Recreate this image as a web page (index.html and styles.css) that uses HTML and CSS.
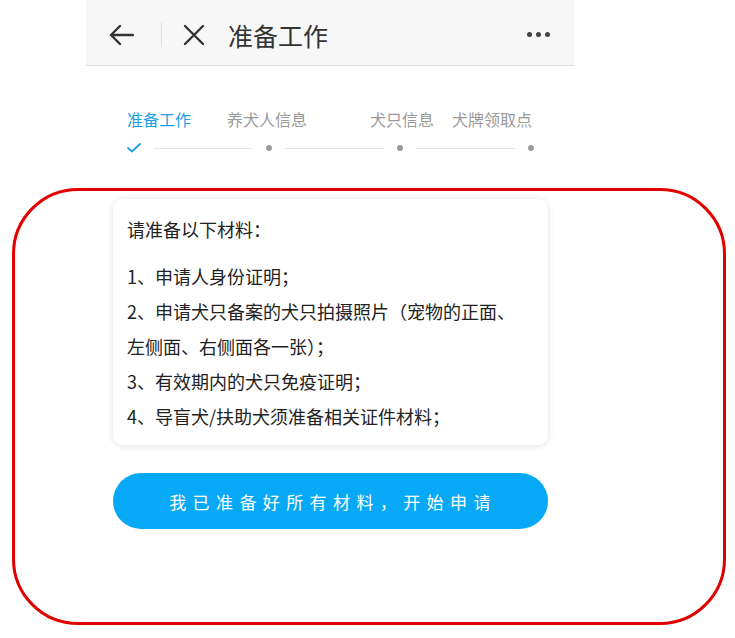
FILE: index.html
```html
<!DOCTYPE html>
<html lang="zh-CN">
<head>
    <meta charset="UTF-8">
    <meta name="viewport" content="width=device-width, initial-scale=1.0">
    <title>准备工作</title>
    <link rel="stylesheet" href="styles.css">
</head>
<body>

    <div class="page">
        <!-- 顶部导航 -->
        <div class="header">
            <svg class="icon-back" width="26" height="22" viewBox="0 0 26 22">
                <path d="M25 11H3 M12 2 L3 11 L12 20" fill="none" stroke="#333" stroke-width="2.4" stroke-linecap="round" stroke-linejoin="round"/>
            </svg>
            <span class="divider"></span>
            <svg class="icon-close" width="22" height="22" viewBox="0 0 22 22">
                <path d="M2 2 L20 20 M20 2 L2 20" fill="none" stroke="#333" stroke-width="2.4" stroke-linecap="round"/>
            </svg>
            <span class="title">准备工作</span>
            <div class="more">
                <span></span><span></span><span></span>
            </div>
        </div>

        <!-- 步骤条 -->
        <div class="steps">
            <div class="labels">
                <span class="label active">准备工作</span>
                <span class="label l2">养犬人信息</span>
                <span class="label l3">犬只信息</span>
                <span class="label l4">犬牌领取点</span>
            </div>
            <div class="progress">
                <svg class="check" width="14" height="10" viewBox="0 0 14 10">
                    <path d="M1 5 L5 8.5 L13 1" fill="none" stroke="#1d9fe6" stroke-width="1.8" stroke-linecap="round" stroke-linejoin="round"/>
                </svg>
                <span class="line"></span>
                <span class="dot"></span>
                <span class="line"></span>
                <span class="dot"></span>
                <span class="line"></span>
                <span class="dot"></span>
            </div>
        </div>

        <!-- 材料说明 -->
        <div class="card">
            <p class="card-title">请准备以下材料：</p>
            <p>1、申请人身份证明；</p>
            <p>2、申请犬只备案的犬只拍摄照片（宠物的正面、左侧面、右侧面各一张）；</p>
            <p>3、有效期内的犬只免疫证明；</p>
            <p>4、导盲犬/扶助犬须准备相关证件材料；</p>
        </div>

        <button class="start">我已准备好所有材料，开始申请</button>
    </div>

    <!-- 标注框 -->
    <div class="mark"></div>

</body>
</html>
```

FILE: styles.css
```css
body {
    margin: 0;
    padding: 0;
    background: #fff;
    font-family: "Noto Sans CJK SC", "Noto Sans", sans-serif;
    color: #333;
}

.page {
    width: 488px;
    margin-left: 86px;
}

.header {
    height: 61px;
    padding: 4px 24px 0 22px;
    display: flex;
    align-items: center;
    background: #f7f7f7;
    border-bottom: 1px solid #dcdcdc;
}

.divider {
    width: 1px;
    height: 25px;
    margin-left: 27px;
    background: #e0e0e0;
}

.icon-close {
    margin-left: 21px;
}

.title {
    margin-left: 23px;
    font-size: 25px;
    color: #333;
}

.more {
    margin-left: auto;
    display: flex;
    gap: 4px;
}

.more span {
    width: 5px;
    height: 5px;
    border-radius: 50%;
    background: #444;
}

.steps {
    margin: 42px 0 0 41px;
    width: 407px;
}

.labels {
    display: flex;
    font-size: 16px;
    line-height: 22px;
    color: #999;
}

.label.active {
    color: #1d9fe6;
}

.l2 {
    margin-left: 36px;
}

.l3 {
    margin-left: 63px;
}

.l4 {
    margin-left: 18px;
}

.progress {
    margin-top: 11px;
    height: 14px;
    display: flex;
    align-items: center;
}

.line {
    flex: 1;
    height: 1px;
    margin: 0 13px;
    background: #e6e6e6;
}

.dot {
    width: 6px;
    height: 6px;
    border-radius: 50%;
    background: #999;
}

.card {
    margin: 44px 0 0 27px;
    width: 435px;
    box-sizing: border-box;
    padding: 13px 26px 11px 14px;
    background: #fff;
    border-radius: 10px;
    box-shadow: 0 1px 7px rgba(0, 0, 0, 0.12);
    font-size: 18px;
    line-height: 35px;
    color: #222;
}

.card p {
    margin: 0;
}

.card .card-title {
    margin-bottom: 12px;
}

.start {
    display: block;
    margin: 28px 0 0 27px;
    width: 435px;
    height: 56px;
    border: none;
    border-radius: 28px;
    background: #07a9f6;
    color: #fff;
    font-family: inherit;
    font-size: 17px;
    letter-spacing: 6.4px;
    padding: 0 0 0 5px;
}

.mark {
    position: absolute;
    left: 12px;
    top: 188px;
    width: 708px;
    height: 431px;
    border: 3px solid #e10000;
    border-radius: 66px;
}
```
